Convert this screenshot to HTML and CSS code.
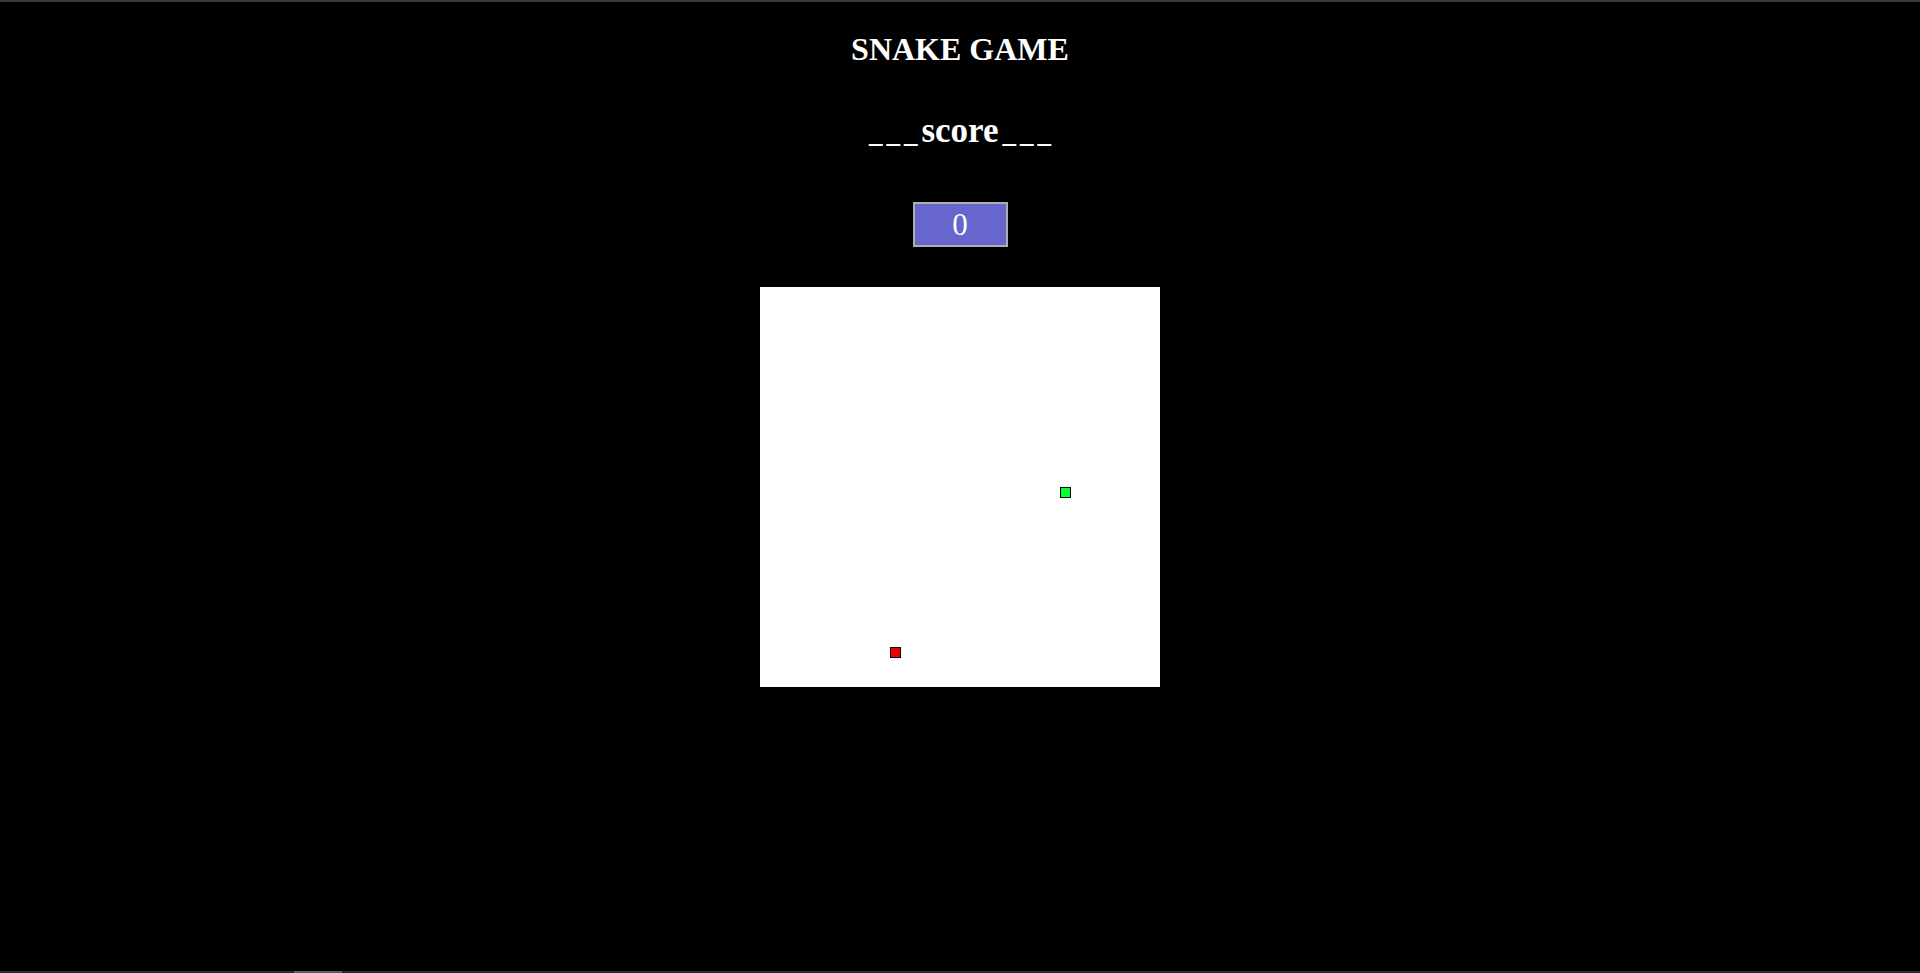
FILE: index.html
```html
<!DOCTYPE html>
<html lang="en">
<head>
<meta charset="utf-8">
<title>Snake Game</title>
<link rel="stylesheet" href="styles.css">
</head>
<body>
<div class="frame">
  <h1 class="title">SNAKE GAME</h1>
  <h2 class="score-label"><span class="dash">___</span>score<span class="dash dash-end">___</span></h2>
  <div class="score-box">0</div>
  <div class="board">
    <div class="cell snake" style="left:300px;top:200px"></div>
    <div class="cell food" style="left:130px;top:360px"></div>
  </div>
</div>
<div class="bottom-edge"><span class="thumb"></span></div>
</body>
</html>
```
FILE: styles.css
```css
html, body {
  margin: 0;
  padding: 0;
  background: #000;
}
body {
  height: 973px;
  overflow: hidden;
  font-family: "Liberation Serif", "Times New Roman", serif;
  color: #fff;
  position: relative;
}
.frame {
  border-top: 2px solid #3a3a3a;
  display: flex;
  flex-direction: column;
  align-items: center;
}
.title {
  margin: 29px 0 0;
  font-size: 32px;
  line-height: 36px;
  font-weight: bold;
}
.score-label {
  margin: 44px 0 0;
  height: 40px;
  font-size: 35px;
  line-height: 40px;
  font-weight: bold;
  white-space: nowrap;
}
.dash {
  font-size: 27px;
  line-height: 1;
  letter-spacing: 4px;
}
.dash-end {
  margin-left: 4px;
  margin-right: -4px;
}
.score-box {
  margin-top: 51px;
  box-sizing: border-box;
  width: 95px;
  height: 45px;
  border: 2px solid #aeaeae;
  background: #6666cc;
  color: #fff;
  font-size: 31px;
  line-height: 41px;
  text-align: center;
}
.board {
  margin-top: 40px;
  width: 400px;
  height: 400px;
  background: #fff;
  position: relative;
}
.cell {
  position: absolute;
  width: 9px;
  height: 9px;
  border: 1px solid #000;
}
.snake { background: #00ff33; }
.food { background: #ee0000; }
.bottom-edge {
  position: absolute;
  left: 0;
  right: 0;
  bottom: 0;
  height: 2px;
  background: #2a2a2a;
}
.thumb {
  position: absolute;
  left: 294px;
  bottom: 0;
  width: 48px;
  height: 2px;
  background: #5a5e66;
}
```
